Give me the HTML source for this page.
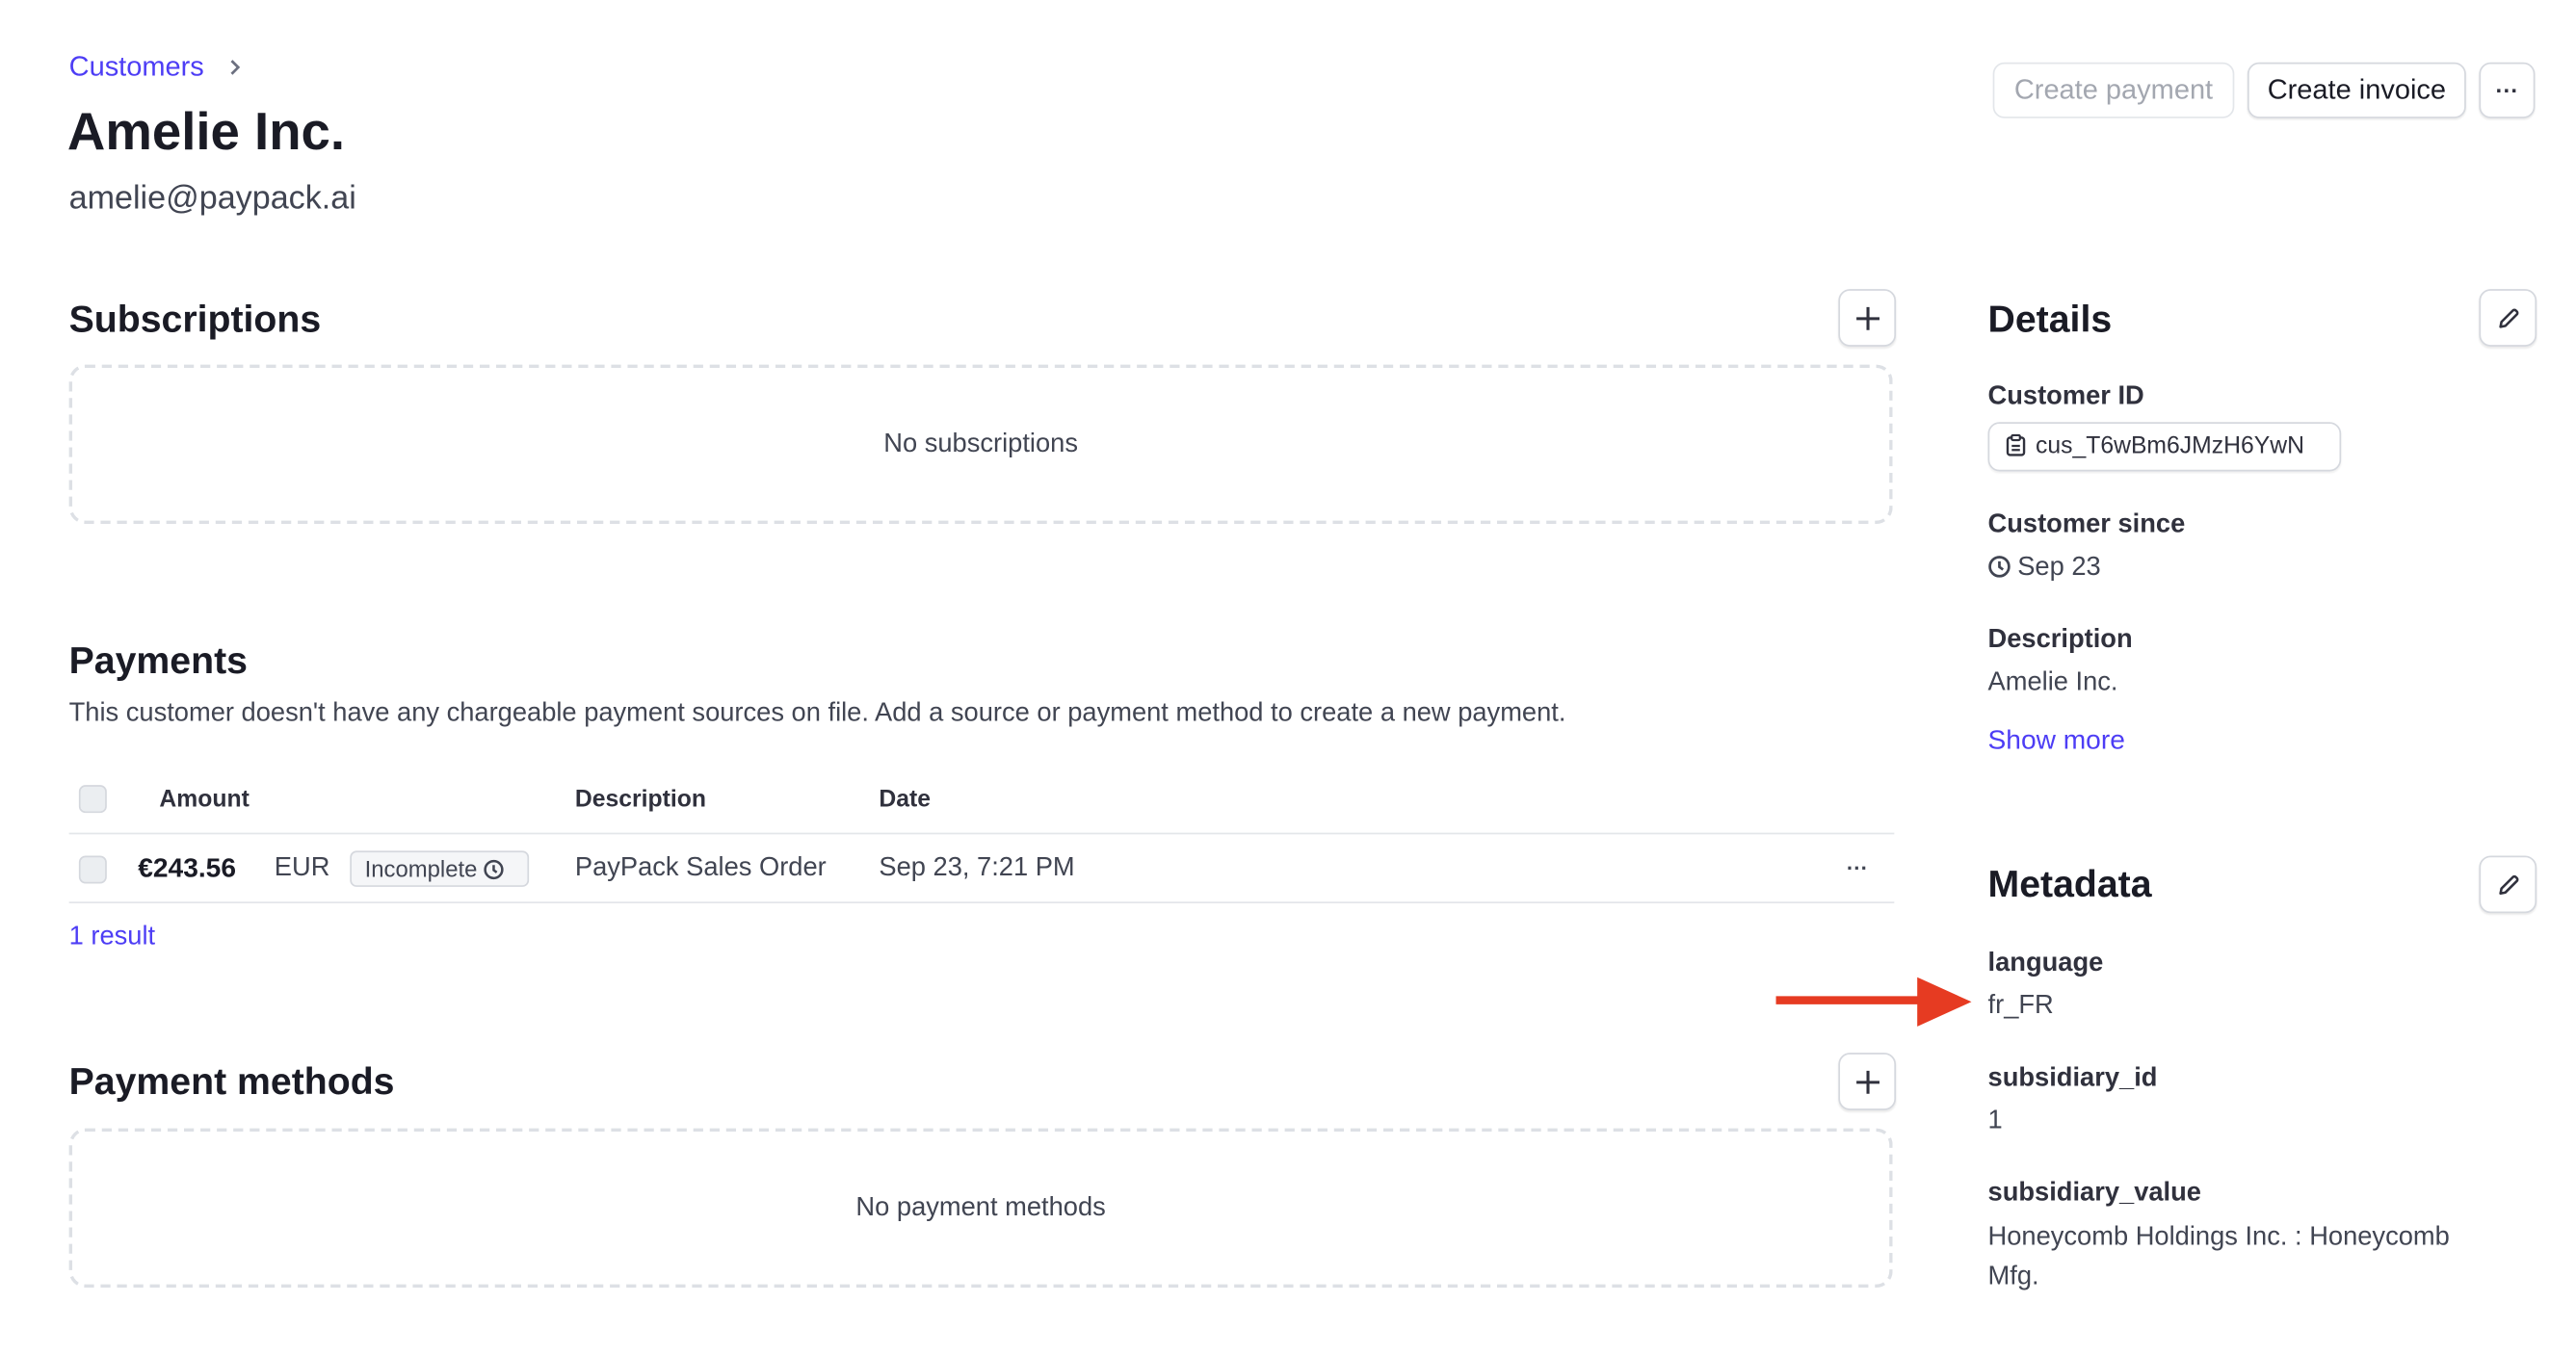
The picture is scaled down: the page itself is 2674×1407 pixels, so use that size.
<!DOCTYPE html>
<html><head><meta charset="utf-8"><style>
html,body{margin:0;padding:0;background:#fff;width:2674px;height:1406px;overflow:hidden}
#w{position:absolute;left:0;top:0;width:1568px;height:825px;transform:scale(1.7054);transform-origin:0 0;font-family:"Liberation Sans",sans-serif;color:#30313d}
.a{position:absolute;white-space:nowrap}
.btn{position:absolute;border:1px solid #d5d8de;border-radius:7px;box-shadow:0 1px 1px rgba(0,0,0,.08);background:#fff;box-sizing:border-box;display:flex;align-items:center;justify-content:center}
.dash{position:absolute;border:2px dashed #dde0e5;border-radius:10px;box-sizing:border-box;display:flex;align-items:center;justify-content:center;font-size:16px;color:#414552}
.h2{font-size:23px;font-weight:bold;color:#1a1b25}
.lbl{font-size:16px;font-weight:bold;color:#30313d}
.val{font-size:16px;color:#414552}
.cb{position:absolute;width:17px;height:17px;border:1px solid #d5d8de;border-radius:4px;background:#ebeef1;box-sizing:border-box}
.line{position:absolute;left:42px;width:1111px;height:1px;background:#e3e6ea}
</style></head><body><div id="w">
<div class="a" style="left:42px;top:31px;font-size:17px;color:#4d3df5;line-height:20px">Customers</div>
<svg class="a" style="left:138px;top:35px" width="10" height="12" viewBox="0 0 10 12"><path d="M3 2l4 4-4 4" fill="none" stroke="#6c7080" stroke-width="1.6"/></svg>
<div class="a" style="left:41px;top:60px;font-size:32px;font-weight:bold;color:#1a1b25;line-height:40px">Amelie Inc.</div>
<div class="a" style="left:42px;top:109px;font-size:20px;color:#414552;line-height:24px">amelie@paypack.ai</div>

<div class="btn" style="left:1213px;top:38px;width:147px;height:34px;font-size:17px;color:#a3a7b0;box-shadow:none;border-color:#e3e6ea">Create payment</div>
<div class="btn" style="left:1368px;top:38px;width:133px;height:34px;font-size:17px;color:#1a1b25">Create invoice</div>
<div class="btn" style="left:1509px;top:38px;width:34px;height:34px;font-size:14px;font-weight:bold;color:#30313d">···</div>

<div class="a h2" style="left:42px;top:180px;line-height:28px">Subscriptions</div>
<div class="btn" style="left:1119px;top:176px;width:35px;height:35px"><svg width="16" height="16" viewBox="0 0 16 16"><path d="M8 1v14M1 8h14" stroke="#30313d" stroke-width="1.8"/></svg></div>
<div class="dash" style="left:42px;top:222px;width:1110px;height:97px">No subscriptions</div>

<div class="a h2" style="left:42px;top:388px;line-height:28px">Payments</div>
<div class="a val" style="left:42px;top:425px;line-height:20px">This customer doesn't have any chargeable payment sources on file. Add a source or payment method to create a new payment.</div>
<div class="cb" style="left:48px;top:478px"></div>
<div class="a" style="left:97px;top:478px;font-size:14.5px;font-weight:bold;line-height:18px">Amount</div>
<div class="a" style="left:350px;top:478px;font-size:14.5px;font-weight:bold;line-height:18px">Description</div>
<div class="a" style="left:535px;top:478px;font-size:14.5px;font-weight:bold;line-height:18px">Date</div>
<div class="line" style="top:507px"></div>
<div class="cb" style="left:48px;top:521px"></div>
<div class="a" style="left:84px;top:519px;font-size:16.5px;font-weight:bold;line-height:20px;color:#1a1b25">€243.56</div>
<div class="a val" style="left:167px;top:519px;line-height:20px">EUR</div>
<div class="a" style="left:213px;top:518px;width:109px;height:22px;border:1px solid #d5d8de;border-radius:4px;background:#f5f6f8;box-sizing:border-box;font-size:14px;color:#414552;line-height:20px;padding-left:8px">Incomplete <svg style="vertical-align:-2px" width="13" height="13" viewBox="0 0 14 14"><circle cx="7" cy="7" r="5.6" fill="none" stroke="#414552" stroke-width="1.6"/><path d="M7 4v3.3l2 1.5" fill="none" stroke="#414552" stroke-width="1.6"/></svg></div>
<div class="a val" style="left:350px;top:519px;line-height:20px">PayPack Sales Order</div>
<div class="a val" style="left:535px;top:519px;line-height:20px">Sep 23, 7:21 PM</div>
<div class="a" style="left:1124px;top:519px;font-size:13px;font-weight:bold;color:#414552;line-height:20px">···</div>
<div class="line" style="top:549px"></div>
<div class="a" style="left:42px;top:561px;font-size:16px;color:#4d3df5;line-height:20px">1 result</div>

<div class="a h2" style="left:42px;top:644px;line-height:28px">Payment methods</div>
<div class="btn" style="left:1119px;top:641px;width:35px;height:35px"><svg width="16" height="16" viewBox="0 0 16 16"><path d="M8 1v14M1 8h14" stroke="#30313d" stroke-width="1.8"/></svg></div>
<div class="dash" style="left:42px;top:687px;width:1110px;height:97px">No payment methods</div>

<div class="a h2" style="left:1210px;top:180px;line-height:28px">Details</div>
<div class="btn" style="left:1509px;top:176px;width:35px;height:35px"><svg width="14" height="14" viewBox="0 0 14 14"><path d="M2 12l.6-3L9.5 2.1a1.3 1.3 0 0 1 1.9 0l.5.5a1.3 1.3 0 0 1 0 1.9L5 11.4z" fill="none" stroke="#30313d" stroke-width="1.5" stroke-linejoin="round"/></svg></div>
<div class="a lbl" style="left:1210px;top:232px;line-height:20px">Customer ID</div>
<div class="a" style="left:1210px;top:257px;width:215px;height:30px;border:1px solid #d5d8de;border-radius:7px;box-sizing:border-box;box-shadow:0 1px 1px rgba(0,0,0,.06);font-size:14.5px;color:#30313d;line-height:28px;padding-left:10px"><svg style="vertical-align:-2px;margin-right:6px" width="12" height="14" viewBox="0 0 12 14"><rect x="1" y="2.5" width="10" height="10.5" rx="1.5" fill="none" stroke="#30313d" stroke-width="1.4"/><rect x="3.5" y="1" width="5" height="3" rx=".8" fill="#fff" stroke="#30313d" stroke-width="1.3"/><path d="M3.5 7.5h5M3.5 10h5" stroke="#30313d" stroke-width="1.3"/></svg>cus_T6wBm6JMzH6YwN</div>
<div class="a lbl" style="left:1210px;top:310px;line-height:20px">Customer since</div>
<div class="a val" style="left:1210px;top:336px;line-height:20px"><svg style="vertical-align:-2px;margin-right:4px" width="14" height="14" viewBox="0 0 14 14"><circle cx="7" cy="7" r="5.8" fill="none" stroke="#414552" stroke-width="1.6"/><path d="M7 3.8v3.4l2.2 1.6" fill="none" stroke="#414552" stroke-width="1.6"/></svg>Sep 23</div>
<div class="a lbl" style="left:1210px;top:380px;line-height:20px">Description</div>
<div class="a val" style="left:1210px;top:406px;line-height:20px">Amelie Inc.</div>
<div class="a" style="left:1210px;top:441px;font-size:16.5px;color:#4d3df5;line-height:20px">Show more</div>

<div class="a h2" style="left:1210px;top:524px;line-height:28px">Metadata</div>
<div class="btn" style="left:1509px;top:521px;width:35px;height:35px"><svg width="14" height="14" viewBox="0 0 14 14"><path d="M2 12l.6-3L9.5 2.1a1.3 1.3 0 0 1 1.9 0l.5.5a1.3 1.3 0 0 1 0 1.9L5 11.4z" fill="none" stroke="#30313d" stroke-width="1.5" stroke-linejoin="round"/></svg></div>
<div class="a lbl" style="left:1210px;top:577px;line-height:20px">language</div>
<div class="a val" style="left:1210px;top:603px;line-height:20px">fr_FR</div>
<div class="a lbl" style="left:1210px;top:647px;line-height:20px">subsidiary_id</div>
<div class="a val" style="left:1210px;top:673px;line-height:20px">1</div>
<div class="a lbl" style="left:1210px;top:717px;line-height:20px">subsidiary_value</div>
<div class="a val" style="left:1210px;top:742px;line-height:24px;white-space:normal;width:300px">Honeycomb Holdings Inc. : Honeycomb Mfg.</div>

<svg class="a" style="left:1078px;top:592px" width="126" height="36" viewBox="0 0 126 36"><path d="M3 17h88" stroke="#e63b22" stroke-width="5"/><path d="M89 3l33 15-33 15z" fill="#e63b22"/></svg>
</div></body></html>
